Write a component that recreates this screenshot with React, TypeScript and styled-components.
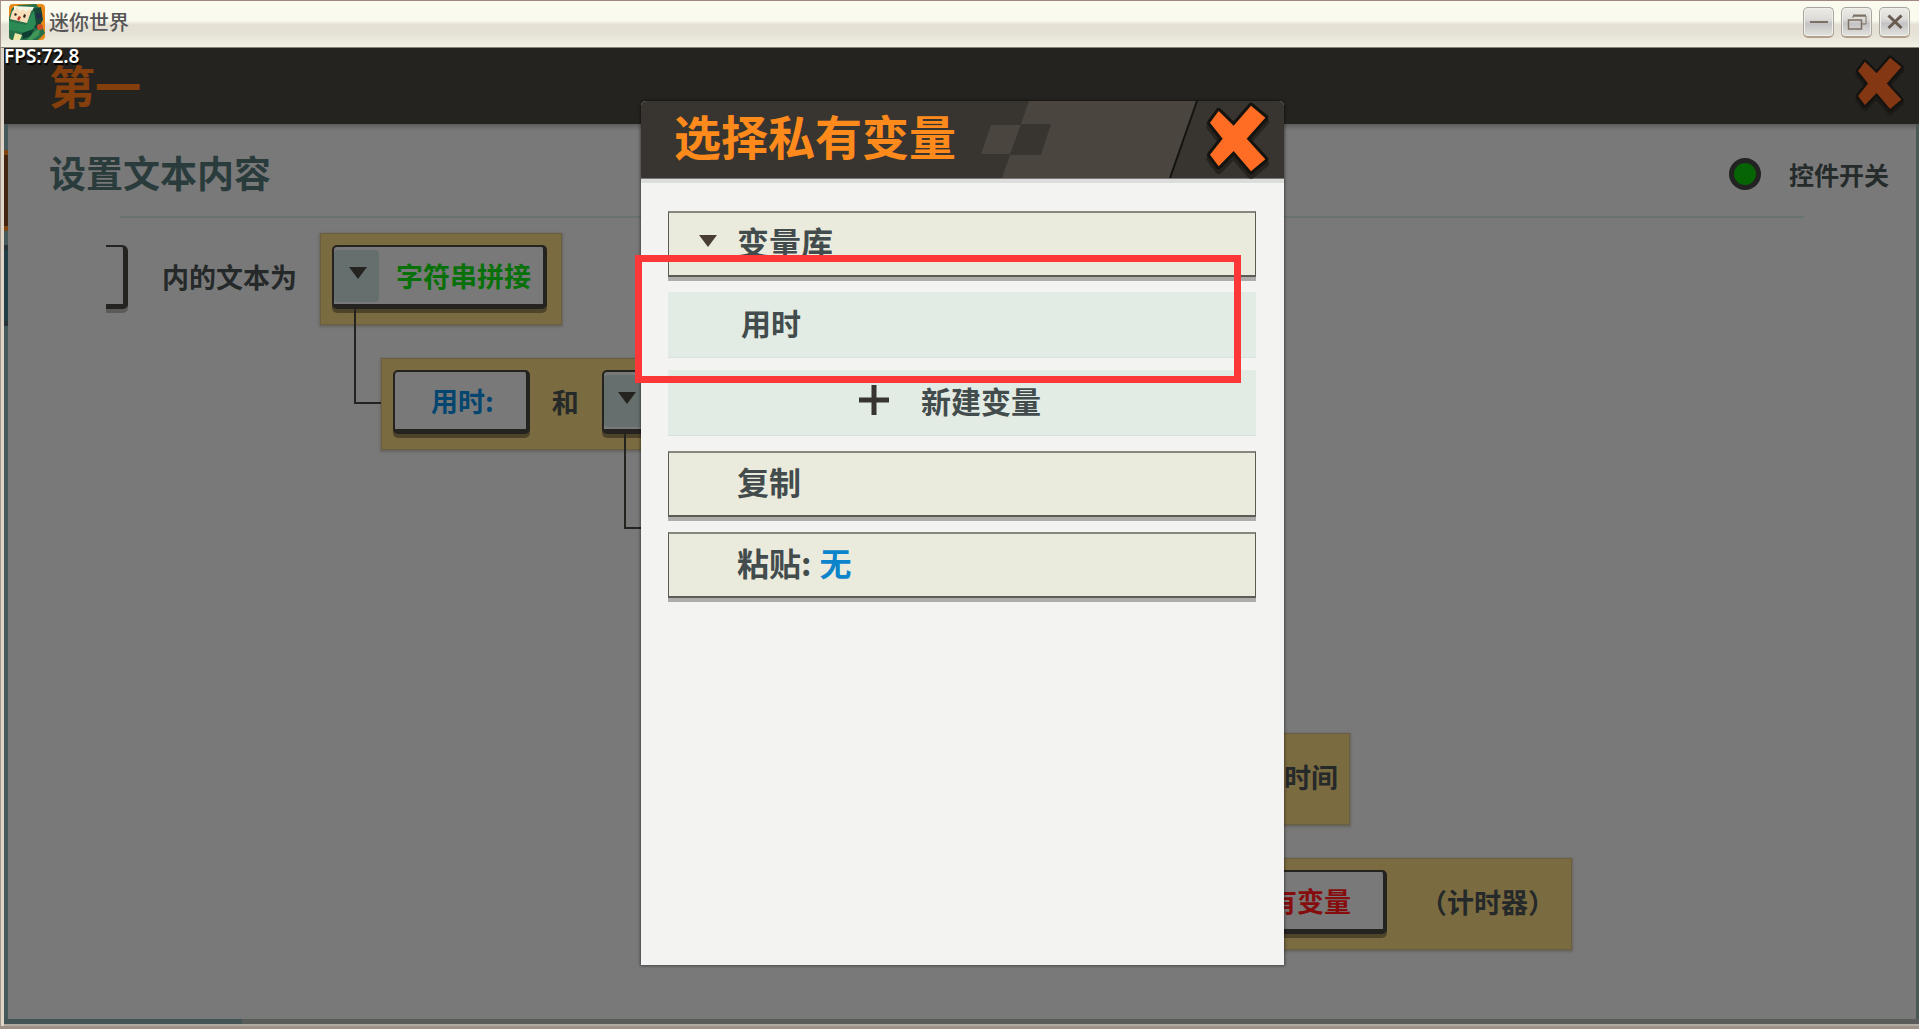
import React from "react";
import styled, { createGlobalStyle } from "styled-components";

const INK = "#25231f";

const GlobalStyle = createGlobalStyle`
  * { box-sizing: border-box; }
  html, body { margin: 0; height: 100%; overflow: hidden; }
  #root { height: 100vh; }
  body, button {
    font-family: "Noto Sans", "Noto Sans CJK SC", sans-serif;
  }
  button { margin: 0; padding: 0; border: 0; background: none; color: inherit; cursor: pointer; }
  svg { display: block; flex: none; }
  h1, h2, p { margin: 0; }
`;

const Window = styled.div`
  height: 100%;
  display: flex;
  flex-direction: column;
  background: #ddd6c9;
  border-left: 1px solid #a3958a;
  border-top: 1px solid #a08880;
  border-bottom: 3px solid #9f9187;
`;

const TitleBar = styled.header`
  height: 47px;
  flex: none;
  display: flex;
  align-items: center;
  gap: 4px;
  padding: 0 9px 4px 8px;
  border-bottom: 1px solid #85857b;
  background: linear-gradient(#fafaee 0, #fafaee 42%, #e5dfd4 52%, #e7e3d7 75%, #f2f1e4 100%);
`;

const AppName = styled.h1`
  flex: 1;
  font: 500 20px/24px "Noto Sans CJK SC", sans-serif;
  color: #555;
`;

const WindowButtons = styled.div`
  display: flex;
  gap: 7px;
`;

const WindowButton = styled.button`
  width: 31px;
  height: 31px;
  display: grid;
  place-items: center;
  border: 1px solid #aaa49e;
  border-bottom: 2px solid #b3a08f;
  border-radius: 5px;
  background: linear-gradient(#ecebe4 0, #dedcd8 40%, #c3c3c5 56%, #e2e2dd 100%);
  box-shadow: inset 0 0 0 1px #f1efe9;
`;

const Client = styled.div`
  flex: 1;
  min-height: 0;
  position: relative;
  display: flex;
  flex-direction: column;
  margin-left: 3px;
  border-bottom: 2px solid #b0aba0;
`;

const Fps = styled.span`
  position: absolute;
  left: 0;
  top: 0;
  font: 600 19px/16px "Noto Sans", sans-serif;
  color: #fff;
  text-shadow: 1px 2px 1px #000;
`;

const PageHeader = styled.header`
  height: 76px;
  flex: none;
  display: flex;
  align-items: center;
  justify-content: space-between;
  padding: 0 14px 4px 45px;
  background: ${INK};
  color: #843f0c;
`;

const PageTitle = styled.h2`
  font: 700 46px/48px "Noto Sans CJK SC", sans-serif;
`;

const Body = styled.div`
  flex: 1;
  min-height: 0;
  display: flex;
  border-right: 3px solid #4b5956;
  background: #797979;
`;

const Rail = styled.div`
  width: 4px;
  flex: none;
  display: flex;
  flex-direction: column;
  gap: 14px;
  padding-top: 26px;
  background: #45595a;
`;

const RailTab = styled.div<{ $active?: boolean }>`
  height: 81px;
  background: ${(p) => (p.$active ? "#41230f" : "#213d46")};
  border: solid ${(p) => (p.$active ? "#7f4310" : "#253338")};
  border-width: 5px 0;
`;

const Page = styled.main`
  flex: 1;
  min-width: 0;
  display: flex;
  flex-direction: column;
  background: linear-gradient(#5e5e5e 0, #727272 5px, #797979 7px);
`;

const Section = styled.div`
  height: 94px;
  flex: none;
  display: flex;
  align-items: center;
  gap: 29px;
  margin: 0 112px 0 112px;
  padding-top: 8px;
  border-bottom: 2px solid #687270;
`;

const SectionTitle = styled.h2`
  flex: 1;
  margin-left: -71px;
  padding-bottom: 4px;
  font: 700 37px/40px "Noto Sans CJK SC", sans-serif;
  color: #2a3b3c;
`;

const Toggle = styled.button`
  display: flex;
  align-items: center;
  gap: 28px;
  margin-right: -85px;
  font: 700 25px/32px "Noto Sans CJK SC", sans-serif;
  color: #252a2b;
`;

const Lamp = styled.span`
  width: 32px;
  height: 32px;
  border: 5px solid #222;
  border-radius: 50%;
  background: #066404;
`;

const Canvas = styled.div`
  flex: 1;
  min-height: 0;
  position: relative;
  overflow: hidden;
`;

const Block = styled.div<{ $x: number; $y: number; $w?: number; $plain?: boolean; $end?: boolean }>`
  position: absolute;
  left: ${(p) => p.$x}px;
  top: ${(p) => p.$y}px;
  width: ${(p) => (p.$w ? `${p.$w}px` : "auto")};
  height: 92px;
  display: flex;
  align-items: center;
  justify-content: ${(p) => (p.$end ? "flex-end" : "flex-start")};
  padding: ${(p) => (p.$plain ? "12px 0 16px" : "12px 12px 16px")};
  background: ${(p) => (p.$plain ? "none" : "#7b6b40")};
  box-shadow: ${(p) => (p.$plain ? "none" : "inset 0 0 0 1px #6a5e40, 0 1px 2px 1px #67655f")};
`;

const Node = styled.button<{ $tone: string }>`
  height: 64px;
  display: flex;
  align-items: center;
  flex: none;
  border: solid ${INK};
  border-width: 2px 4px 5px 2px;
  border-radius: 5px;
  background: #797979;
  box-shadow: 0 4px 0 rgba(25, 23, 15, 0.45);
  font: 700 27px/32px "Noto Sans CJK SC", sans-serif;
  color: ${(p) => p.$tone};
`;

const NodeText = styled.span`
  padding: 0 12px 0 17px;
`;

const ValueText = styled.span`
  padding: 0 32px 0 36px;
`;

const Drop = styled.span`
  width: 45px;
  height: 52px;
  display: grid;
  place-items: center;
  padding: 0 0 6px 2px;
  border-radius: 4px;
  background: #65706e;
`;

const Word = styled.p<{ $before?: number; $after?: number }>`
  margin: 0 ${(p) => p.$after ?? 0}px 0 ${(p) => p.$before ?? 0}px;
  font: 700 27px/32px "Noto Sans CJK SC", sans-serif;
  color: #25292a;
  white-space: nowrap;
`;

const Bracket = styled.span`
  width: 22px;
  height: 64px;
  margin-right: 34px;
  border: solid ${INK};
  border-width: 2px 5px 5px 0;
  border-radius: 0 6px 5px 0;
  box-shadow: 0 4px 0 #5b5b5a;
`;

const Link = styled.span<{ $x: number; $y: number }>`
  position: absolute;
  left: ${(p) => p.$x}px;
  top: ${(p) => p.$y}px;
  width: 27px;
  height: 96px;
  border: solid ${INK};
  border-width: 0 0 2px 2px;
`;

const Footer = styled.div`
  height: 5px;
  flex: none;
  background: linear-gradient(90deg, #435455 238px, #5a5c59 238px);
`;

const Overlay = styled.div`
  position: absolute;
  inset: 0;
  display: flex;
  justify-content: center;
  padding: 53px 0 59px 2px;
`;

const Dialog = styled.section`
  position: relative;
  width: 643px;
  display: flex;
  flex-direction: column;
  border-radius: 5px 5px 0 0;
  background: #f3f3f1;
  box-shadow: 0 0 3px 1px rgba(0, 0, 0, 0.4);
`;

const DialogHeader = styled.header`
  height: 77px;
  flex: none;
  display: flex;
  justify-content: space-between;
  padding: 0 14px 0 33px;
  border-radius: 5px 5px 0 0;
  background: #383530;
  box-shadow: 0 1px 0 #777, 0 5px 0 #dcdcdb;
`;

const DialogTitle = styled.h2`
  font: 700 47px/68px "Noto Sans CJK SC", sans-serif;
  color: #ff8a1c;
`;

const HeaderEnd = styled.div`
  display: flex;
  align-items: flex-start;
  gap: 8px;
`;

const List = styled.div`
  display: flex;
  flex-direction: column;
  gap: 15px;
  padding: 33px 28px 33px 27px;
`;

const Group = styled.div`
  display: flex;
  flex-direction: column;
  gap: 12px;
`;

const Row = styled.button`
  height: 66px;
  display: flex;
  align-items: center;
  padding: 0 0 6px 68px;
  border: 1px solid #5d5b54;
  border-top: 2px solid #88877f;
  border-bottom-width: 2px;
  background: #ebebdd;
  box-shadow: 0 4px 0 #acacab;
  font: 700 32px/40px "Noto Sans CJK SC", sans-serif;
  color: #434c4d;
`;

const ExpandRow = styled(Row)`
  gap: 20px;
  padding-left: 30px;
`;

const ItemRow = styled.button<{ $center?: boolean }>`
  height: 66px;
  display: flex;
  align-items: center;
  justify-content: ${(p) => (p.$center ? "center" : "flex-start")};
  gap: 32px;
  padding: ${(p) => (p.$center ? "0 24px 6px 0" : "0 0 6px 73px")};
  border-bottom: 1px solid #d9e1dc;
  background: #e3ece4;
  font: 700 30px/40px "Noto Sans CJK SC", sans-serif;
  color: #434c4d;
`;

const Clip = styled.span`
  margin-left: 8px;
  color: #0b84cc;
`;

const Highlight = styled.div`
  position: absolute;
  top: 154px;
  left: -6px;
  right: 43px;
  height: 128px;
  border: 7px solid #fc3737;
  pointer-events: none;
`;

const Triangle = ({ fill = INK }: { fill?: string }) => (
  <svg width="18" height="12" viewBox="0 0 18 12" aria-hidden="true">
    <path d="M0 0H18L9 12Z" fill={fill} />
  </svg>
);

const Cross = ({ width, height, fill }: { width: number; height: number; fill: string }) => (
  <svg width={width} height={height} viewBox="738 36 192 234" aria-hidden="true" overflow="visible">
    <g strokeLinejoin="round">
      <path
        d="M776 78L821 122L873 62L916 98L860 161L916 223L873 259L821 198L776 244L750 209L788 161L750 113Z"
        fill="#15130f"
        stroke="#15130f"
        strokeWidth="22"
        opacity="0.5"
      />
      <path
        d="M776 66L821 110L873 50L916 86L860 149L916 211L873 247L821 186L776 232L750 197L788 149L750 101Z"
        fill={fill}
        stroke="#15130f"
        strokeWidth="18"
        paintOrder="stroke"
      />
    </g>
  </svg>
);

const AppIcon = () => (
  <svg width="36" height="36" viewBox="0 0 36 36" aria-hidden="true">
    <defs>
      <clipPath id="icon-frame">
        <rect width="36" height="36" rx="4" />
      </clipPath>
    </defs>
    <g clipPath="url(#icon-frame)">
      <rect width="36" height="36" fill="#e88919" />
      <path d="M0 14L3 4L10 1L27 0L33 8L32 20L36 29L29 36H0Z" fill="#27704a" />
      <path d="M24 5L32 3L34 16L28 25L22 22Z" fill="#174637" />
      <path d="M0 17L17 21L25 6L27 20L20 31L12 28L0 26Z" fill="#2c8a55" />
      <path d="M3 8L6 4L23 5L18 19L1 15Z" fill="#f8dfb9" />
      <path d="M5 2L25 3L23 7L20 5L17 8L14 5L11 7L8 4L5 7Z" fill="#f4f6e5" />
      <path d="M6 9L8 10L7 12L5 11ZM15 10L17 11L16 14L14 13Z" fill="#35251f" />
      <path d="M10 12L12 13L10 17L8 15Z" fill="#bd3527" />
      <path d="M4 36L6 29L13 31L11 36Z" fill="#eee7a7" />
      <path d="M13 29L25 25L22 32L14 35Z" fill="#0e3d32" />
      <path d="M24 29L31 24L30 31L23 36H18Z" fill="#3f9857" />
      <circle cx="31" cy="23" r="3" fill="#cb4c28" />
      <circle cx="30" cy="12" r="3" fill="#202f46" />
    </g>
  </svg>
);

export default function App() {
  return (
    <>
      <GlobalStyle />
      <Window>
        <TitleBar>
          <AppIcon />
          <AppName>迷你世界</AppName>
          <WindowButtons>
            <WindowButton aria-label="最小化">
              <svg width="20" height="18" viewBox="0 0 20 18">
                <path d="M1 9H19" stroke="#7d7064" strokeWidth="2" />
              </svg>
            </WindowButton>
            <WindowButton aria-label="还原">
              <svg width="20" height="18" viewBox="0 0 20 18" fill="none" stroke="#7d7064">
                <path d="M6 5V3H19V11H15" strokeWidth="1" />
                <path d="M6 2.5H19" strokeWidth="2" />
                <rect x="1.5" y="7" width="13" height="9" strokeWidth="1.5" />
              </svg>
            </WindowButton>
            <WindowButton aria-label="关闭窗口">
              <svg width="20" height="18" viewBox="0 0 20 18">
                <path d="M3.5 2.5L16.5 15M16.5 2.5L3.5 15" stroke="#675b50" strokeWidth="3" />
              </svg>
            </WindowButton>
          </WindowButtons>
        </TitleBar>

        <Client>
          <PageHeader>
            <PageTitle>第一</PageTitle>
            <button aria-label="关闭">
              <Cross width={50} height={61} fill="#833713" />
            </button>
          </PageHeader>
          <Fps>FPS:72.8</Fps>

          <Body>
            <Rail>
              <RailTab $active />
              <RailTab />
            </Rail>
            <Page>
              <Section>
                <SectionTitle>设置文本内容</SectionTitle>
                <Toggle>
                  <Lamp />
                  控件开关
                </Toggle>
              </Section>
              <Canvas>
                <Block $x={98} $y={15} $plain>
                  <Bracket />
                  <Word>内的文本为</Word>
                </Block>
                <Block $x={312} $y={15} $w={242}>
                  <Node $tone="#087008">
                    <Drop>
                      <Triangle />
                    </Drop>
                    <NodeText>字符串拼接</NodeText>
                  </Node>
                </Block>
                <Block $x={373} $y={140} $w={500}>
                  <Node $tone="#04466f">
                    <ValueText>用时:</ValueText>
                  </Node>
                  <Word $before={22} $after={23}>
                    和
                  </Word>
                  <Node $tone="#087008">
                    <Drop>
                      <Triangle />
                    </Drop>
                    <NodeText />
                  </Node>
                </Block>
                <Link $x={346} $y={90} />
                <Link $x={616} $y={215} />
                <Block $x={892} $y={515} $w={450} $end>
                  <Word>时间</Word>
                </Block>
                <Block $x={1050} $y={640} $w={514} $end>
                  <Node $tone="#850d0d">
                    <ValueText>有变量</ValueText>
                  </Node>
                  <Word $before={33} $after={5}>
                    （计时器）
                  </Word>
                </Block>
              </Canvas>
            </Page>
          </Body>
          <Footer />

          <Overlay>
            <Dialog role="dialog" aria-labelledby="dialog-title">
              <DialogHeader>
                <DialogTitle id="dialog-title">选择私有变量</DialogTitle>
                <HeaderEnd>
                  <svg width="220" height="77" viewBox="0 0 220 77" aria-hidden="true">
                    <path d="M51 0H219L192 77H24Z" fill="#4a463f" />
                    <path d="M13 24H43L32 53H3Z" fill="#4a463f" />
                    <path d="M43 23H73L63 54H32Z" fill="#383530" />
                    <path d="M219 0L192 77" stroke="#15130f" strokeWidth="2" />
                  </svg>
                  <button aria-label="关闭对话框">
                    <Cross width={64} height={78} fill="#ff6d24" />
                  </button>
                </HeaderEnd>
              </DialogHeader>
              <List>
                <ExpandRow aria-expanded="true">
                  <Triangle fill="#493e36" />
                  变量库
                </ExpandRow>
                <Group>
                  <ItemRow>用时</ItemRow>
                  <ItemRow $center>
                    <svg width="30" height="30" viewBox="0 0 30 30" aria-hidden="true">
                      <path d="M15 0V30M0 15H30" stroke="#383530" strokeWidth="5" />
                    </svg>
                    新建变量
                  </ItemRow>
                </Group>
                <Row>复制</Row>
                <Row>
                  粘贴:<Clip>无</Clip>
                </Row>
              </List>
              <Highlight />
            </Dialog>
          </Overlay>
        </Client>
      </Window>
    </>
  );
}
